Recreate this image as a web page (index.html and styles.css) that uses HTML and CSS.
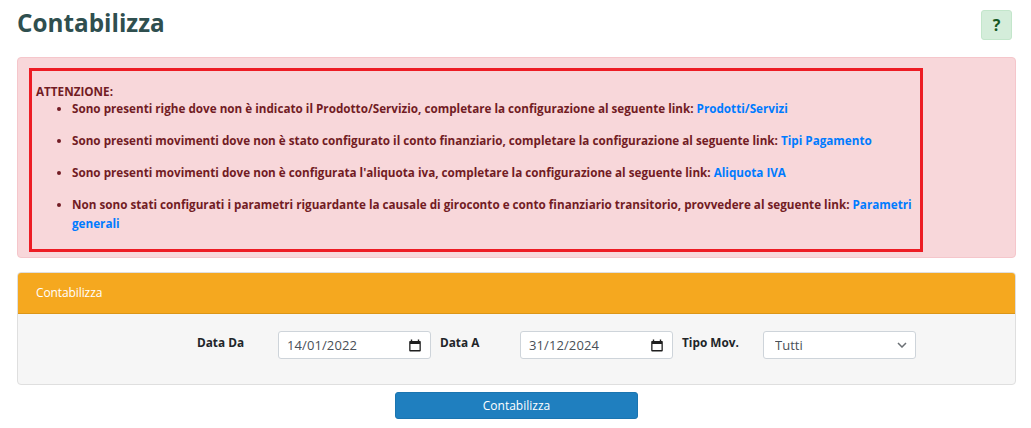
FILE: index.html
```html
<!DOCTYPE html>
<html lang="it">
<head>
<meta charset="utf-8">
<title>Contabilizza</title>
<link rel="stylesheet" href="styles.css">
</head>
<body>
<header class="head">
  <h1 class="title">Contabilizza</h1>
  <button class="help" type="button">?</button>
</header>
<section class="alert">
  <div class="redbox">
    <strong class="att">ATTENZIONE:</strong>
    <ul class="list">
      <li>Sono presenti righe dove non è indicato il Prodotto/Servizio, completare la configurazione al seguente link: <a href="#">Prodotti/Servizi</a></li>
      <li>Sono presenti movimenti dove non è stato configurato il conto finanziario, completare la configurazione al seguente link: <a href="#">Tipi Pagamento</a></li>
      <li>Sono presenti movimenti dove non è configurata l'aliquota iva, completare la configurazione al seguente link: <a href="#">Aliquota IVA</a></li>
      <li>Non sono stati configurati i parametri riguardante la causale di giroconto e conto finanziario transitorio, provvedere al seguente link: <a href="#">Parametri generali</a></li>
    </ul>
  </div>
</section>
<section class="card">
  <div class="card-head">Contabilizza</div>
  <div class="card-body">
    <span class="lab lab1">Data Da</span>
    <label class="ctl date">
      <input class="date-text" type="text" value="14/01/2022" aria-label="Data Da">
      <svg class="cal" width="12" height="13" viewBox="0 0 12 13" aria-hidden="true"><path d="M2.5 0.5v2M9.5 0.5v2" stroke="#1f1f1f" stroke-width="1.4" fill="none"/><path d="M1 2h10a0.8 0.8 0 0 1 .8.8v8.6a1 1 0 0 1-1 1H1.2a1 1 0 0 1-1-1V2.8A.8.8 0 0 1 1 2zM1.5 5v6.1h9V5z" fill="#1f1f1f" fill-rule="evenodd"/></svg>
    </label>
    <span class="lab lab2">Data A</span>
    <label class="ctl date">
      <input class="date-text" type="text" value="31/12/2024" aria-label="Data A">
      <svg class="cal" width="12" height="13" viewBox="0 0 12 13" aria-hidden="true"><path d="M2.5 0.5v2M9.5 0.5v2" stroke="#1f1f1f" stroke-width="1.4" fill="none"/><path d="M1 2h10a0.8 0.8 0 0 1 .8.8v8.6a1 1 0 0 1-1 1H1.2a1 1 0 0 1-1-1V2.8A.8.8 0 0 1 1 2zM1.5 5v6.1h9V5z" fill="#1f1f1f" fill-rule="evenodd"/></svg>
    </label>
    <span class="lab lab3">Tipo Mov.</span>
    <label class="ctl sel">
      <select class="sel-input" aria-label="Tipo Mov."><option>Tutti</option></select>
      <svg class="chev" width="10" height="6" viewBox="0 0 10 6" aria-hidden="true"><path d="M1 1l4 4 4-4" stroke="#6b7075" stroke-width="1.5" fill="none"/></svg>
    </label>
  </div>
</section>
<div class="actions"><button class="go" type="button">Contabilizza</button></div>
</body>
</html>
```
FILE: styles.css
```css
* { box-sizing: border-box; }
html, body { margin: 0; padding: 0; }
body {
  background: #fff;
  font-family: "Open Sans", sans-serif;
  font-size: 12px;
  color: #212529;
  padding: 0 15px 0 17px;
}
.head { display: flex; justify-content: space-between; align-items: flex-start; height: 57px; }
.title { margin: 6px 0 0; font-size: 24.3px; line-height: 33px; font-weight: 700; color: #2f4f4f; }
.help {
  width: 31px; height: 30px; margin: 10px 4px 0 0; padding: 0;
  background: #d4edda; border: 1px solid #c3e6cb; border-radius: 3px;
  color: #155724; font: 700 16px "Open Sans", sans-serif;
}
.alert {
  height: 201px; padding: 10px 11px;
  background: #f8d7da; border: 1px solid #f5c6cb; border-radius: 4px;
  color: #721c24;
}
.redbox { width: 894px; height: 184px; border: 3px solid #ed1c24; padding: 13px 4px 0; font-weight: 700; font-size: 11.7px; line-height: 19px; }
.att { display: block; line-height: 15px; font-weight: 700; }
.list { margin: 0; padding: 0 0 0 36px; }
.list li { margin-bottom: 13px; }
.list li:last-child { margin-bottom: 0; }
.list a { color: #007bff; text-decoration: none; }
.card { margin-top: 14px; height: 113px; border: 1px solid #dfdfdf; border-radius: 4px; background: #f6f6f6; overflow: hidden; }
.card-head { height: 41px; background: #f5a81f; border-bottom: 1px solid #dc9618; color: #fff; padding: 0 18px; line-height: 40px; font-size: 12px; letter-spacing: -0.1px; }
.card-body { display: flex; align-items: flex-start; padding: 17px 0 0 180px; }
.lab { font-weight: 700; font-size: 11.8px; line-height: 17px; padding-top: 3px; margin-left: -1px; }
.lab1 { width: 81px; }
.lab2 { width: 80px; margin-left: 9px; }
.lab3 { width: 81px; margin-left: 9px; }
.ctl { display: flex; align-items: center; height: 28px; width: 153px; border: 1px solid #ced4da; border-radius: 3px; background: #fff; }
.date { padding: 0 9px 0 8px; }
.date-text, .sel-input {
  flex: 1; min-width: 0; height: 100%; padding: 0; border: 0; outline: 0; background: transparent;
  color: #495057; font: 13px "Open Sans", sans-serif;
}
.date-text { letter-spacing: 0.1px; }
.sel { padding: 0 8px 0 11px; }
.sel-input { appearance: none; -webkit-appearance: none; }
.cal, .chev { flex: none; }
.actions { display: flex; justify-content: center; padding-top: 7px; }
.go { width: 243px; height: 27px; background: #1f7fbf; border: 1px solid #1b75b0; border-radius: 3px; color: #fff; font: 12px "Open Sans", sans-serif; }
```
